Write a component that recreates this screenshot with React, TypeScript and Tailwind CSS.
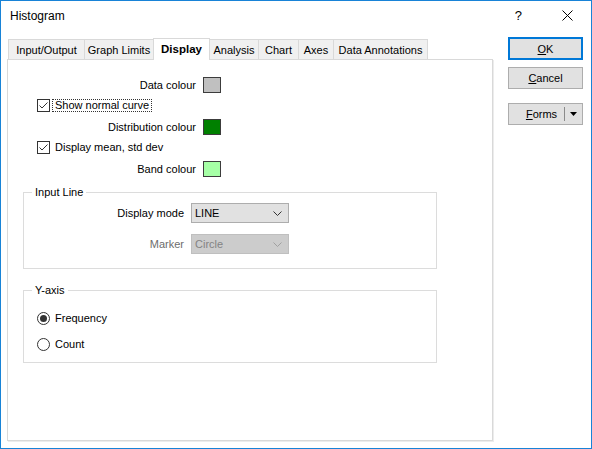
import type { ReactNode } from 'react'

const tabs = [
  { label: 'Input/Output', w: 'w-[77px]' },
  { label: 'Graph Limits', w: 'w-[70px]' },
  { label: 'Display', w: 'w-[57px]', active: true },
  { label: 'Analysis', w: 'w-[50px]' },
  { label: 'Chart', w: 'w-[41px]' },
  { label: 'Axes', w: 'w-[36px]' },
  { label: 'Data Annotations', w: 'w-[95px]' },
]

function CheckBox() {
  return (
    <svg width="13" height="13" viewBox="0 0 13 13" className="shrink-0">
      <rect x="0.5" y="0.5" width="12" height="12" fill="#fff" stroke="#333" />
      <path d="M2.5 6.5 L5 9 L10.5 3.5" fill="none" stroke="#333" strokeWidth="1" />
    </svg>
  )
}

function Radio({ checked }: { checked?: boolean }) {
  return (
    <svg width="13" height="13" viewBox="0 0 13 13" className="shrink-0">
      <circle cx="6.5" cy="6.5" r="6" fill="#fff" stroke="#333" />
      {checked && <circle cx="6.5" cy="6.5" r="3.5" fill="#333" />}
    </svg>
  )
}

function Chevron({ color }: { color: string }) {
  return (
    <svg width="9" height="5" viewBox="0 0 9 5" className="shrink-0">
      <path d="M0.5 0.5 L4.5 4.5 L8.5 0.5" fill="none" stroke={color} strokeWidth="1" />
    </svg>
  )
}

function ColourRow({ label, swatch }: { label: string; swatch: string }) {
  return (
    <div className="h-[21px] flex items-center">
      <div className="w-[188px] text-right">{label}</div>
      <span className={`ml-[7px] w-[18px] h-[16px] border border-[#3c3c3c] ${swatch}`} />
    </div>
  )
}

function GroupBox({ title, className, children }: { title: string; className: string; children: ReactNode }) {
  return (
    <fieldset className={`ml-[15px] w-[414px] border border-[#dcdcdc] ${className}`}>
      <legend className="ml-[8px] px-[3px] leading-[16px]">{title}</legend>
      {children}
    </fieldset>
  )
}

export default function App() {
  return (
    <div className="w-[592px] h-[449px] border border-[#1883d7] bg-white flex flex-col text-[11px] text-black font-['Liberation_Sans',Arial,sans-serif] leading-[16px] overflow-hidden">
      <div className="h-[29px] shrink-0 flex items-center pl-[9px] text-[12px]">
        <span>Histogram</span>
        <span className="ml-auto text-[13px] mr-[40px]">?</span>
        <svg width="11" height="11" viewBox="0 0 11 11" className="mr-[18px]">
          <path d="M0.5 0.5 L10.5 10.5 M10.5 0.5 L0.5 10.5" stroke="#000" strokeWidth="1" />
        </svg>
      </div>

      <div className="flex pl-[6px] pt-[7px]">
        <div className="w-[486px] flex flex-col">
          <div className="h-[22px] flex items-end pl-[1px]">
            {tabs.map((t, i) =>
              t.active ? (
                <div key={t.label} className={`${t.w} ${i ? '-ml-px' : ''} relative z-10 -mb-px h-[22px] bg-white border border-b-0 border-[#d9d9d9] flex items-center justify-center font-bold text-[11.5px] pb-[1px]`}>
                  {t.label}
                </div>
              ) : (
                <div key={t.label} className={`${t.w} ${i ? '-ml-px' : ''} h-[20px] bg-[#f0f0f0] border border-b-0 border-[#d9d9d9] flex items-center justify-center`}>
                  {t.label}
                </div>
              )
            )}
          </div>

          <div className="h-[382px] border border-[#d9d9d9] shadow-[1px_1px_0_#ececec] flex flex-col">
            <div className="pt-[14px] flex flex-col">
              <ColourRow label="Data colour" swatch="bg-[#c0c0c0]" />
              <div className="h-[21px] flex items-center pl-[29px]">
                <CheckBox />
                <span className="ml-[2px] px-[2px] border border-dotted border-[#333] leading-[11px]">Show normal curve</span>
              </div>
              <ColourRow label="Distribution colour" swatch="bg-[#008000]" />
              <div className="h-[21px] flex items-center pl-[29px]">
                <CheckBox />
                <span className="ml-[2px] px-[2px] border border-transparent leading-[11px]">Display mean, std dev</span>
              </div>
              <ColourRow label="Band colour" swatch="bg-[#a6ffa6]" />
            </div>

            <GroupBox title="Input Line" className="mt-[5px] pb-[14px]">
              <div className="mt-[3px] h-[20px] flex items-center">
                <div className="w-[160px] text-right">Display mode</div>
                <div className="ml-[7px] w-[98px] h-[20px] bg-[#e1e1e1] border border-[#adadad] flex items-center pl-[3px] pr-[6px]">
                  <span className="flex-1">LINE</span>
                  <Chevron color="#333" />
                </div>
              </div>
              <div className="mt-[11px] h-[20px] flex items-center">
                <div className="w-[160px] text-right text-[#6d6d6d]">Marker</div>
                <div className="ml-[7px] w-[98px] h-[20px] bg-[#cccccc] border border-[#bfbfbf] flex items-center pl-[3px] pr-[6px] text-[#838383]">
                  <span className="flex-1">Circle</span>
                  <Chevron color="#a0a0a0" />
                </div>
              </div>
            </GroupBox>

            <GroupBox title="Y-axis" className="mt-[13px] pb-[8px]">
              <div className="mt-[10px] h-[20px] flex items-center pl-[13px]">
                <Radio checked />
                <span className="ml-[5px]">Frequency</span>
              </div>
              <div className="mt-[6px] h-[20px] flex items-center pl-[13px]">
                <Radio />
                <span className="ml-[5px]">Count</span>
              </div>
            </GroupBox>
          </div>
        </div>

        <div className="ml-[15px] w-[75px] flex flex-col">
          <button className="h-[23px] bg-[#e1e1e1] border-2 border-[#0078d7] flex items-center justify-center">
            <span><span className="underline">O</span>K</span>
          </button>
          <button className="mt-[7px] h-[22px] bg-[#e1e1e1] border border-[#adadad] flex items-center justify-center">
            <span><span className="underline">C</span>ancel</span>
          </button>
          <button className="mt-[14px] h-[22px] bg-[#e1e1e1] border border-[#adadad] flex items-center">
            <span className="flex-1 text-center pl-[10px]"><span className="underline">F</span>orms</span>
            <span className="w-px h-[14px] bg-[#8a8a8a]" />
            <svg width="17" height="6" viewBox="0 0 17 6">
              <path d="M5 1 L12 1 L8.5 5 Z" fill="#000" />
            </svg>
          </button>
        </div>
      </div>
    </div>
  )
}
